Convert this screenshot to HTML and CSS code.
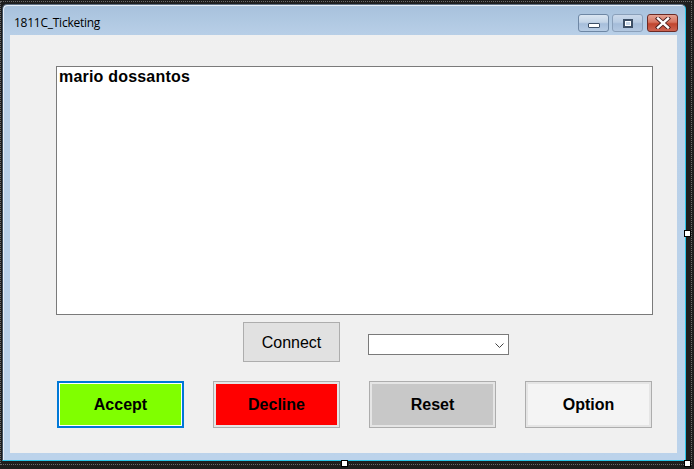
FILE: index.html
```html
<!DOCTYPE html>
<html>
<head>
<meta charset="utf-8">
<link rel="stylesheet" href="styles.css">
</head>
<body>
<div class="designer">
  <div class="selection"></div>
  <div class="window">
    <div class="titlebar">
      <span class="title">1811C_Ticketing</span>
      <div class="caption">
        <div class="cap cap-min"><span class="min-bar"></span></div>
        <div class="cap cap-max"><span class="max-box"></span></div>
        <div class="cap cap-close">
          <svg width="16" height="12" viewBox="0 0 16 12">
            <path d="M3 1.5 L13 10.5 M13 1.5 L3 10.5" stroke="#4a1e1e" stroke-width="4.2" stroke-linecap="square"/>
            <path d="M3 1.5 L13 10.5 M13 1.5 L3 10.5" stroke="#ffffff" stroke-width="2.4" stroke-linecap="square"/>
          </svg>
        </div>
      </div>
    </div>
    <div class="client">
      <div class="textbox">mario dossantos</div>
      <div class="midrow">
        <div class="btn connect">Connect</div>
        <div class="combo">
          <svg width="9" height="6" viewBox="0 0 9 6"><path d="M0.5 0.5 L4.5 4.5 L8.5 0.5" fill="none" stroke="#444" stroke-width="1"/></svg>
        </div>
      </div>
      <div class="actions">
        <div class="act accept"><span>Accept</span></div>
        <div class="act decline"><span>Decline</span></div>
        <div class="act reset"><span>Reset</span></div>
        <div class="act option"><span>Option</span></div>
      </div>
    </div>
  </div>
  <div class="handle h-right"></div>
  <div class="handle h-bottom"></div>
  <div class="handle h-corner"></div>
</div>
</body>
</html>
```

FILE: styles.css
```css
html, body {
  margin: 0;
  padding: 0;
  background: #1e1e1e;
  width: 694px;
  height: 469px;
  overflow: hidden;
}
.designer {
  position: relative;
  width: 694px;
  height: 469px;
  padding: 4px 0 0 2px;
  box-sizing: border-box;
}
.selection {
  position: absolute;
  left: 0;
  top: 1px;
  width: 690px;
  height: 462px;
  border: 1px dotted #6a6a6a;
}
.window {
  position: relative;
  width: 684px;
  height: 457px;
  box-sizing: border-box;
  border: 1px solid #3d4d5e;
  border-top-color: #5c6d80;
  border-right: 1px solid #29c4e8;
  border-bottom: 1px solid #29c4e8;
  border-radius: 5px 5px 0 0;
  background: linear-gradient(to bottom, #a7c1dc 0px, #b8cfe7 30px, #bcd3eb 100%);
  box-shadow: inset 1px 1px 0 #e6eef7;
  padding: 0 8px 0 7px;
}
.titlebar {
  height: 30px;
  display: flex;
  align-items: flex-start;
  justify-content: space-between;
}
.title {
  font-family: "Open Sans", "Noto Sans", sans-serif;
  font-size: 12px;
  color: #000;
  margin: 9px 0 0 4px;
  letter-spacing: -0.25px;
}
.caption {
  display: flex;
  margin-top: 9px;
  margin-right: -1px;
}
.cap {
  width: 31px;
  height: 18px;
  box-sizing: border-box;
  border: 1px solid #6e87a4;
  border-radius: 3px;
  display: flex;
  align-items: center;
  justify-content: center;
}
.cap-min {
  background: linear-gradient(to bottom, #dbe6f2 0%, #c3d4e7 45%, #a6bedb 55%, #b7cce4 100%);
  margin-right: 3px;
}
.cap-max {
  background: linear-gradient(to bottom, #cbd9ea 0%, #b8cce3 45%, #a4bcd9 55%, #b3c8e1 100%);
  border-color: #8aa0ba;
  margin-right: 4px;
}
.cap-close {
  background: linear-gradient(to bottom, #e4a293 0%, #d6735f 45%, #c0452e 55%, #cd6452 100%);
  border-color: #6d2a24;
}
.min-bar {
  display: block;
  width: 12px;
  height: 5px;
  box-sizing: border-box;
  border: 1px solid #3c4f66;
  background: #fff;
  border-radius: 1px;
  margin-top: 4px;
}
.max-box {
  display: block;
  width: 10px;
  height: 9px;
  box-sizing: border-box;
  border: 2px solid #3c4f66;
  background: #c8d8ea;
  box-shadow: inset 0 0 0 1px #fff;
}
.client {
  width: 667px;
  height: 418px;
  background: #f0f0f0;
  padding: 31px 0 0 46px;
  box-sizing: border-box;
  font-family: "Liberation Sans", Arial, sans-serif;
}
.textbox {
  width: 597px;
  height: 249px;
  box-sizing: border-box;
  border: 1px solid #7a7a7a;
  background: #fff;
  font-weight: bold;
  font-size: 16px;
  letter-spacing: 0.2px;
  color: #000;
  padding: 1px 0 0 2px;
  line-height: 18px;
}
.midrow {
  display: flex;
  align-items: flex-start;
  margin-top: 7px;
  padding-left: 187px;
  gap: 28px;
}
.btn.connect {
  width: 97px;
  height: 40px;
  box-sizing: border-box;
  border: 1px solid #adadad;
  background: #e1e1e1;
  font-size: 16px;
  display: flex;
  align-items: center;
  justify-content: center;
  padding-top: 1px;
  color: #000;
}
.combo {
  margin-top: 12px;
  width: 141px;
  height: 21px;
  box-sizing: border-box;
  border: 1px solid #7a7a7a;
  background: #fff;
  display: flex;
  align-items: center;
  justify-content: flex-end;
  padding-right: 4px;
}
.combo svg { margin-top: 2px; }
.actions {
  display: grid;
  grid-template-columns: repeat(4, 127px);
  column-gap: 29px;
  margin-top: 19px;
  padding-left: 1px;
}
.act {
  height: 47px;
  box-sizing: border-box;
  border: 1px solid #adadad;
  padding: 2px;
  background: #e5e5e5;
}
.act span {
  display: flex;
  align-items: center;
  justify-content: center;
  height: 100%;
  font-weight: bold;
  font-size: 16px;
  color: #000;
}
.accept {
  border: 2px solid #0078d7;
  padding: 1px;
  background: #ffffff;
}
.accept span { background: #80ff00; }
.decline span { background: #ff0000; }
.reset span { background: #c8c8c8; }
.option span { background: #f4f4f4; }
.handle {
  position: absolute;
  width: 5px;
  height: 5px;
  background: #fff;
  border: 1px solid #000;
}
.h-right { left: 684px; top: 230px; }
.h-bottom { left: 341px; top: 460px; }
.h-corner { left: 684px; top: 460px; }
```
